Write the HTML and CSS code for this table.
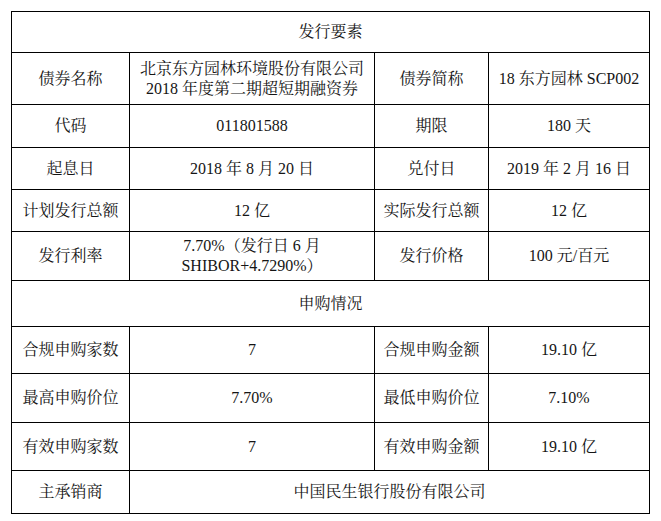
FILE: index.html
```html
<!DOCTYPE html>
<html lang="zh-CN">
<head>
<meta charset="utf-8">
<title>发行要素</title>
<link rel="stylesheet" href="styles.css">
</head>
<body>
<div class="sheet">
  <div class="grid">
    <div class="cell span4">发行要素</div>

    <div class="cell">债券名称</div>
    <div class="cell two">北京东方园林环境股份有限公司<br>2018 年度第二期超短期融资券</div>
    <div class="cell">债券简称</div>
    <div class="cell">18 东方园林 SCP002</div>

    <div class="cell">代码</div>
    <div class="cell">011801588</div>
    <div class="cell">期限</div>
    <div class="cell">180 天</div>

    <div class="cell">起息日</div>
    <div class="cell">2018 年 8 月 20 日</div>
    <div class="cell">兑付日</div>
    <div class="cell">2019 年 2 月 16 日</div>

    <div class="cell">计划发行总额</div>
    <div class="cell">12 亿</div>
    <div class="cell">实际发行总额</div>
    <div class="cell">12 亿</div>

    <div class="cell">发行利率</div>
    <div class="cell two">7.70%（发行日 6 月<br>SHIBOR+4.7290%）</div>
    <div class="cell">发行价格</div>
    <div class="cell">100 元/百元</div>

    <div class="cell span4">申购情况</div>

    <div class="cell">合规申购家数</div>
    <div class="cell">7</div>
    <div class="cell">合规申购金额</div>
    <div class="cell">19.10 亿</div>

    <div class="cell">最高申购价位</div>
    <div class="cell">7.70%</div>
    <div class="cell">最低申购价位</div>
    <div class="cell">7.10%</div>

    <div class="cell">有效申购家数</div>
    <div class="cell">7</div>
    <div class="cell">有效申购金额</div>
    <div class="cell">19.10 亿</div>

    <div class="cell">主承销商</div>
    <div class="cell span3">中国民生银行股份有限公司</div>
  </div>
</div>
</body>
</html>
```

FILE: styles.css
```css
html, body {
  margin: 0;
  padding: 0;
  background: #ffffff;
}

.sheet {
  padding: 11px 0 0 11px;
}

.grid {
  display: grid;
  width: 639px;
  box-sizing: border-box;
  padding: 1px;
  gap: 1px;
  background: #000000;
  grid-template-columns: 117px 244px 113px 160px;
  grid-template-rows: 40px 51px 42px 41px 41px 48px 45px 46px 48px 47px 42px;
  font-family: "Liberation Serif", "Noto Serif CJK SC", "Noto Sans CJK SC", serif;
  font-size: 16px;
  color: #151515;
}

.cell {
  background: #ffffff;
  display: flex;
  align-items: center;
  justify-content: center;
  text-align: center;
  line-height: 20px;
  white-space: nowrap;
}

.two {
  line-height: 20px;
}

.span4 {
  grid-column: span 4;
}

.span3 {
  grid-column: span 3;
}
```
